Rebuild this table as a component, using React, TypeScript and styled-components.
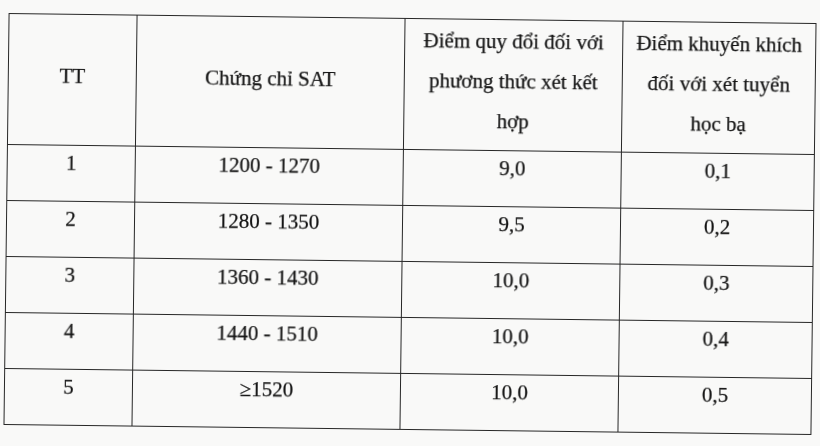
import React from "react";
import styled, { createGlobalStyle } from "styled-components";

const GlobalStyle = createGlobalStyle`
  html, body {
    margin: 0;
    padding: 0;
    background: #f9f9f8;
  }
  body {
    width: 820px;
    height: 446px;
    overflow: hidden;
    font-family: "Liberation Serif", "Times New Roman", serif;
    color: #141414;
  }
`;

const Page = styled.div`
  width: 820px;
  height: 446px;
  padding: 18px 0 0 6px;
  box-sizing: border-box;
`;

// the scanned page is a little tilted, so the table is too
const Table = styled.table`
  width: 807px;
  border-collapse: collapse;
  table-layout: fixed;
  transform: rotate(0.71deg);
  transform-origin: center center;
  filter: blur(0.3px);
  font-size: 21px;
  -webkit-text-stroke: 0.25px #141414;
`;

const Cell = styled.td<{ $head?: boolean }>`
  border: 1.7px solid #262626;
  text-align: center;
  vertical-align: ${(p) => (p.$head ? "middle" : "top")};
  padding: ${(p) => (p.$head ? "0 4px 8px" : "5px 4px 0")};
  line-height: ${(p) => (p.$head ? "40px" : "24px")};
  white-space: nowrap;
`;

const HeadRow = styled.tr`
  height: 131px;
`;

const BodyRow = styled.tr`
  height: 56px;
`;

const rows = [
  { tt: "1", sat: "1200 - 1270", diem: "9,0", kk: "0,1" },
  { tt: "2", sat: "1280 - 1350", diem: "9,5", kk: "0,2" },
  { tt: "3", sat: "1360 - 1430", diem: "10,0", kk: "0,3" },
  { tt: "4", sat: "1440 - 1510", diem: "10,0", kk: "0,4" },
  { tt: "5", sat: "≥1520", diem: "10,0", kk: "0,5" },
];

export default function App() {
  return (
    <Page>
      <GlobalStyle />
      <Table>
        <colgroup>
          <col style={{ width: 128 }} />
          <col style={{ width: 268 }} />
          <col style={{ width: 218 }} />
          <col style={{ width: 193 }} />
        </colgroup>
        <tbody>
          <HeadRow>
            <Cell $head>TT</Cell>
            <Cell $head>Chứng chỉ SAT</Cell>
            <Cell $head>
              Điểm quy đổi đối với
              <br />
              phương thức xét kết
              <br />
              hợp
            </Cell>
            <Cell $head>
              Điểm khuyến khích
              <br />
              đối với xét tuyển
              <br />
              học bạ
            </Cell>
          </HeadRow>
          {rows.map((r) => (
            <BodyRow key={r.tt}>
              <Cell>{r.tt}</Cell>
              <Cell>{r.sat}</Cell>
              <Cell>{r.diem}</Cell>
              <Cell>{r.kk}</Cell>
            </BodyRow>
          ))}
        </tbody>
      </Table>
    </Page>
  );
}
